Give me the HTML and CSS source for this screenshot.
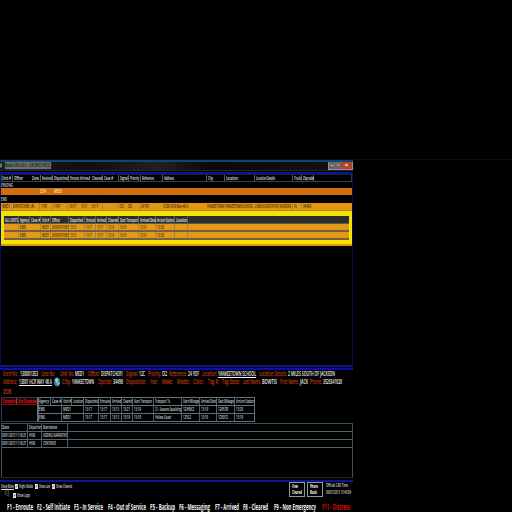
FILE: index.html
```html
<!DOCTYPE html>
<html lang="en">
<head>
<meta charset="utf-8">
<title>Mobile CAD</title>
<link rel="stylesheet" href="styles.css">
</head>
<body>
<div class="desktop"></div>
<main class="window">
  <header class="titlebar">
    <svg class="appicon" viewBox="0 0 4 6"><path d="M0 1h2v4H0z" fill="#4c8a50"/></svg>
    <div class="title" data-row="titlebar"></div>
    <div class="controls"><i class="min">–</i><i class="max">▫</i><i class="close">×</i></div>
  </header>
  <section class="calls">
    <div class="row head" data-row="callHead"></div>
    <div class="group pending" data-row="pending"></div>
    <div class="row orange" data-row="pendingRow"></div>
    <div class="group ems" data-row="ems"></div>
    <div class="row amber" data-row="emsRow"></div>
    <div class="units">
      <div class="row unithead" data-row="unitHead"></div>
      <div class="row unit" data-row="unitRow"></div>
      <div class="row unit" data-row="unitRow"></div>
    </div>
    <div class="under"></div>
  </section>
  <section class="details">
    <div class="line" data-row="event"></div>
    <div class="line" data-row="address"></div>
    <svg class="globe" viewBox="0 0 8 10"><ellipse cx="4" cy="5" rx="3" ry="4.4" fill="#2f7fb0"/><path d="M2 2l3-1v4l-2 1zM4 6l3-1-2 4z" fill="#9bd0b0"/></svg>
    <div class="line dob" data-row="dob"></div>
    <div class="history">
      <div class="alerts"><div class="row alerthead" data-row="alerts"></div></div>
      <div class="times">
        <div class="row timehead" data-row="timeHead"></div>
        <div class="row" data-row="time1"></div>
        <div class="row" data-row="time2"></div>
      </div>
    </div>
    <div class="notes">
      <div class="row" data-row="noteHead"></div>
      <div class="row" data-row="note1"></div>
      <div class="row" data-row="note2"></div>
    </div>
  </section>
  <footer class="footer">
    <div class="tools">
      <div class="options">
        <div class="opt" data-row="opt1"></div>
        <div class="opt second">
          <svg class="moon" viewBox="0 0 6 9"><path d="M1.500 .8Q.3 4 1.500 6.500L4.500 8.600Q6 5 4 1z" fill="#1b1e21" stroke="#50575d" stroke-width=".7"/></svg>
          <div class="opt" data-row="opt2"></div>
        </div>
      </div>
      <div class="button"><div data-row="btn1a"></div><div data-row="btn1b"></div></div>
      <div class="button"><div data-row="btn2a"></div><div data-row="btn2b"></div></div>
      <div class="clock"><div data-row="clock1"></div><div data-row="clock2"></div></div>
    </div>
    <div class="keys" data-row="keys"></div>
  </footer>
</main>
<script src="app.js"></script>
</body>
</html>
```
FILE: styles.css
```css
* { box-sizing: border-box; }
body { margin: 0; width: 512px; height: 512px; overflow: hidden; background: #000; color: #dcdcdc; font: 600 6px/7px "Open Sans", "Liberation Sans", sans-serif; }
.desktop { height: 160px; border-bottom: 1px solid #0d0d0d; }
.window { width: 353px; height: 353px; margin-top: -1px; padding-top: 1px; display: flex; flex-direction: column; }
.window > * { flex: none; }
.titlebar { height: 11px; display: flex; background: linear-gradient(90deg, #1a1d1c, #0d0f0e 25%, #20221c 45%, #090909 60%, #111 90%); border-top: 2px solid #0e4673; border-bottom: 1px solid #252525; }
.appicon { width: 4px; height: 7px; margin-right: 1px; }
.title { width: 46px; height: 7px; background: #6c716f; color: #0c0c0c; font-size: 6px; line-height: 7px; box-shadow: 0 0 2px #4a4f4d; }
.controls { margin-left: auto; height: 8px; display: flex; font: 700 6px/7px "Liberation Sans", sans-serif; border: 1px solid #99918d; border-top: 0; color: #eee; }
.controls i { font-style: normal; width: 6px; text-align: center; background: #686868; }
.controls .close { width: 11px; background: #b83e2d; }
.calls { height: 195px; margin-top: 1px; border: 1px solid #0b0b68; border-top: 2px solid #1010a8; border-bottom: 2px solid #1010a4; display: flex; flex-direction: column; }
.row, [data-row] { display: flex; flex: none; }
.cell { flex: none; height: 100%; white-space: nowrap; }
.cell span { display: inline-block; transform-origin: 0 50%; }
.row .cell.bar { border-left: 1px solid #48606b; padding-left: 1px; }
.head { height: 8px; border: 1px solid #2d4654; border-top-color: #14202a; line-height: 6px; color: #e6e6e6; }
.group { height: 7px; line-height: 6px; color: #ddd; }
.pending { height: 6px; }
.orange { height: 7px; background: #cf6e0e; line-height: 7px; color: #ffe2c0; }
.orange .cell.bar { border-color: #b56f30; }
.ems { height: 8px; line-height: 8px; }
.amber { height: 8px; background: #e29612; line-height: 7px; color: #3d2503; border-bottom: 1px solid #a98331; }
.units { flex: none; height: 33px; border: 4px solid #f0e400; border-top-width: 5px; border-left-width: 3px; border-right-width: 3px; background: #dd9412; }
.unithead { height: 8px; background: #2c2c2c; line-height: 8px; color: #f0f0f0; border-bottom: 1px solid #5b594e; }
.unit { height: 8px; line-height: 7px; background: #e29a18; color: #4a2c05; border-bottom: 2px solid #746143; }
.unit .cell.bar, .amber .cell.bar { border-color: #a78548; }
.under { height: 2px; flex: none; background: #de9612; }
.details { height: 114px; margin-top: 1px; border-top: 2px solid #1010a0; border-bottom: 2px solid #11119a; position: relative; padding-left: 1px; }
.line { height: 8px; line-height: 8px; font-size: 7px; color: #f4f4f4; }
.line .k { color: #c43c14; }
.dob { margin-top: 2px; }
.globe { position: absolute; left: 53px; top: 7px; width: 8px; height: 10px; }
.history { display: flex; margin-top: 1px; height: 25px; }
.alerts { width: 37px; border: 1px solid #303c44; border-right-color: #68737c; }
.alerthead { height: 7px; border-bottom: 1px solid #7a1118; color: #ff1414; background: #290406; line-height: 6px; }
.times { width: 217px; border: 1px solid #5c7480; border-bottom: 0; }
.times .row { height: 8px; border-bottom: 1px solid #5c7480; line-height: 7px; }
.notes { height: 55px; margin-top: 1px; border: 1px solid #3c4f59; border-bottom-color: #24242e; }
.notes .row { height: 8px; border-bottom: 1px solid #4d6571; line-height: 7px; }
.footer { height: 30px; }
.tools { display: flex; height: 19px; }
.options { width: 288px; padding-top: 1px; color: #ddd; }
.opt { height: 7px; line-height: 7px; font-size: 5.5px; }
.second { display: flex; margin-top: 2px; }
.moon { width: 6px; height: 9px; margin: -4px 0 0 4px; }
.second .opt { margin-left: 2.5px; }
.k.box span { background: #e8e8e8; color: #333; font-size: 5px; line-height: 5px; height: 5px; }
.button { width: 16px; height: 15px; margin: 0 1px; border: 1px solid #92979a; font-weight: 700; font-size: 5px; line-height: 6px; color: #fff; padding-left: 2px; }
.button [data-row] { height: 6px; }
.clock { margin-left: 2px; font-size: 5px; line-height: 7px; }
.clock [data-row] { height: 7px; }
.keys { height: 11px; font-size: 8px; line-height: 11px; font-weight: 700; color: #f2f2f2; }
.keys .k { color: #d90b0b; }
```
FILE: app.js
```js
// Each entry: [start x, text width, text, flags]; flags: "|" divider, "k" accent, "b" checkbox, "u" underline
const rows = {
  titlebar: [[0, 45, "Mobile CAD v2.8.4 - 3.08 [MED1/RECS]"]],
  callHead: [[0, 9, "Unit #"], [10, 9, "Officer", "|"], [30, 7, "Zone"], [38, 10, "Received", "|"], [50, 14, "Dispatched", "|"], [66, 9, "Enroute", "|"], [78, 10, "Arrived"], [90, 10, "Cleared"], [100, 9, "Case #", "|"], [116, 8, "Signal", "|"], [126, 9, "Priority", "|"], [138, 12, "Reference", "|"], [160, 10, "Address", "|"], [204, 5, "City", "|"], [222, 12, "Location", "|"], [252, 19, "Location Details", "|"], [290, 7, "Truck", "|"], [299, 11, "Zipcode", "|"], [311, 0, "", "|"]],
  pending: [[0, 12, "PENDING"]],
  pendingRow: [[39, 6, "2254"], [51, 8, "MED3", "|"], [66, 0, "", "|"], [101, 0, "", "|"]],
  ems: [[0, 6, "EMS"]],
  emsRow: [[1, 8, "MED1"], [10, 17, "DISPATCHER1", "|"], [30, 3, "A"], [38, 6, "1147", "|"], [51, 6, "1147", "|"], [66, 7, "13:17", "|"], [80, 6, "13:17"], [90, 7, "13:17"], [101, 0, "", "|"], [116, 5, "12C", "|"], [127, 4, "O2"], [138, 8, "24 YOF", "|"], [162, 25, "X 200 HCR Way 48 A"], [206, 46, "YANKEETOWN YANKEETOWN SCHOOL"], [254, 36, "2 MILES SOUTH OF JACKSON"], [291, 3, "FL", "|"], [300, 8, "34498", "|"]],
  unitHead: [[1, 13, "ALL UNITS"], [14, 9, "Agency", "|"], [25, 9, "Case #", "|"], [36, 7, "Unit #", "|"], [46, 8, "Officer", "|"], [64, 13, "Dispatched", "|"], [80, 9, "Enroute", "|"], [91, 9, "Arrived", "|"], [102, 10, "Cleared", "|"], [114, 18, "Start Transport", "|"], [134, 16, "Arrived Dest", "|"], [151, 17, "Arrium Station", "|"], [170, 11, "Location", "|"], [183, 0, "", "|"]],
  unitRow: [[14, 6, "EMS", "|"], [36, 7, "MED1", "|"], [46, 17, "DISPATCHER1", "|"], [64, 6, "13:13", "|"], [80, 6, "13:17", "|"], [91, 6, "13:17", "|"], [102, 6, "13:18", "|"], [114, 6, "13:19", "|"], [134, 6, "13:19", "|"], [151, 7, "13:20", "|"], [170, 0, "", "|"], [183, 0, "", "|"]],
  event: [[2, 15, "Event No:", "k"], [19, 18, "130001353"], [40, 14, "Case No:", "k"], [59, 14, "Unit No:", "k"], [74, 9, "MED1"], [87, 12, "Officer:", "k"], [100, 22, "DISPATCHER1"], [125, 12, "Signal:", "k"], [138, 6, "12C"], [147, 13, "Priority:", "k"], [161, 5, "O2"], [168, 18, "Reference:", "k"], [187, 11, "24 YOF"], [201, 15, "Location:", "k"], [217, 38, "YANKEETOWN SCHOOL", "u"], [258, 28, "Location Details:", "k"], [287, 47, "2 MILES SOUTH OF JACKSON"]],
  address: [[2, 14, "Address:", "k"], [18, 33, "13001 HCR WAY 48 A", "u"], [61, 9, "City:", "k"], [71, 22, "YANKEETOWN"], [97, 14, "Zipcode:", "k"], [112, 10, "34498"], [125, 20, "Disposition:", "k"], [149, 8, "Year:", "k"], [161, 11, "Make:", "k"], [176, 13, "Model:", "k"], [192, 11, "Color:", "k"], [207, 11, "Tag #:", "k"], [221, 18, "Tag State:", "k"], [242, 18, "Last Name:", "k"], [261, 15, "BOWTIS"], [279, 19, "First Name:", "k"], [299, 8, "JACK"], [309, 12, "Phone:", "k"], [322, 19, "3526341626"]],
  dob: [[2, 9, "DOB:", "k"]],
  alerts: [[1, 12, "Detention"], [14, 19, "Not Contacted", "|"]],
  timeHead: [[0, 10, "Agency"], [11, 9, "Case #", "|"], [22, 8, "Unit #", "|"], [32, 10, "Location", "|"], [44, 13, "Dispatched", "|"], [59, 10, "Enroute", "|"], [71, 9, "Arrived", "|"], [82, 9, "Cleared", "|"], [93, 18, "Start Transport", "|"], [114, 15, "Transport To", "|"], [142, 16, "Start Mileage", "|"], [160, 15, "Arrived Dest", "|"], [177, 16, "Dest Mileage", "|"], [195, 18, "Arrium Station", "|"]],
  time1: [[0, 6, "EMS"], [22, 8, "MED1", "|"], [44, 7, "13:17", "|"], [59, 7, "13:17", "|"], [71, 7, "13:13", "|"], [82, 7, "13:21", "|"], [93, 7, "13:19", "|"], [114, 26, "12 - Seasons Spaulding", "|"], [142, 11, "124562", "|"], [160, 7, "13:19", "|"], [177, 10, "124578", "|"], [195, 7, "13:20", "|"]],
  time2: [[0, 6, "EMS"], [22, 8, "MED1", "|"], [44, 7, "13:17", "|"], [59, 7, "13:17", "|"], [71, 7, "13:13", "|"], [82, 7, "13:19", "|"], [93, 7, "13:19", "|"], [114, 16, "Yellow Coast", "|"], [142, 8, "1250.2", "|"], [160, 7, "13:19", "|"], [177, 10, "125012", "|"], [195, 7, "13:19", "|"]],
  noteHead: [[0, 7, "Date"], [25, 12, "Dispatcher", "|"], [39, 14, "Narrative", "|"], [65, 0, "", "|"]],
  note1: [[0, 24, "09/01/2015 11:18:23"], [25, 6, "HH98", "|"], [39, 24, "ADDING NARRATIVE", "|"], [65, 0, "", "|"]],
  note2: [[0, 24, "09/01/2015 11:18:27"], [25, 6, "HH98", "|"], [39, 13, "CONTINUE", "|"], [65, 0, "", "|"]],
  opt1: [[1, 13, "Show Mode", "u"], [15, 3, "✓", "kb"], [19, 14, "Night Mode"], [35, 3, "✓", "kb"], [39, 11, "Show Law"], [52, 3, "✓", "kb"], [56, 16, "Show Cleared"]],
  opt2: [[0, 3, "✓", "kb"], [4, 13, "Show Logo"]],
  btn1a: [[0, 6, "View"]], btn1b: [[0, 10, "Cleared"]],
  btn2a: [[0, 8, "Phone"]], btn2b: [[0, 7, "Book"]],
  clock1: [[0, 22, "Official CAD Time"]], clock2: [[0, 25, "09/01/2015 13:45:04"]],
  keys: [[7, 26, "F1 - Enroute"], [37, 33, "F2 - Self Initiate"], [74, 29, "F3 - In Service"], [108, 38, "F4 - Out of Service"], [150, 25, "F5 - Backup"], [179, 31, "F6 - Messaging"], [215, 24, "F7 - Arrived"], [243, 25, "F8 - Cleared"], [274, 42, "F9 - Non Emergency"], [322, 28, "F11 - Distress", "k"]]
};

document.querySelectorAll("[data-row]").forEach(el => {
  const cells = rows[el.dataset.row];
  cells.forEach(([start, width, text, flags = ""], i) => {
    const cell = document.createElement("div");
    cell.className = "cell" + (flags.includes("|") ? " bar" : "") + (flags.includes("k") ? " k" : "") + (flags.includes("b") ? " box" : "");
    if (i === 0) cell.style.marginLeft = start + "px";
    cell.style.width = (i + 1 < cells.length ? cells[i + 1][0] - start : width + 2) + "px";
    const span = document.createElement("span");
    span.textContent = text;
    if (flags.includes("u")) span.style.textDecoration = "underline";
    cell.append(span);
    el.append(cell);
    if (text) span.style.transform = `scaleX(${width / span.getBoundingClientRect().width})`;
  });
});
```
